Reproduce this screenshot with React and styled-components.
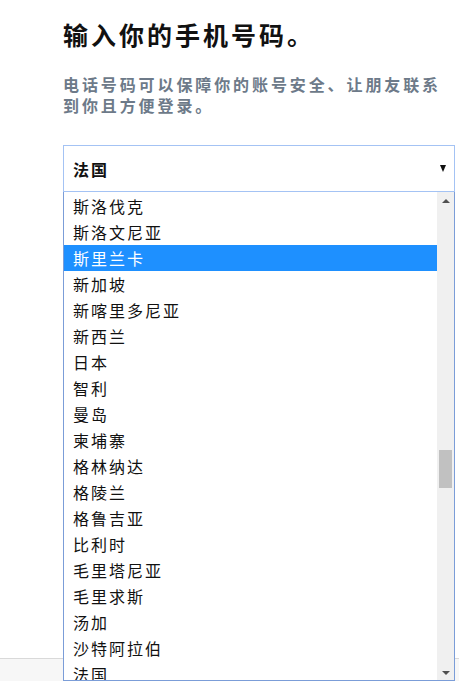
import React from "react";
import styled, { createGlobalStyle } from "styled-components";

const GlobalStyle = createGlobalStyle`
  html, body {
    margin: 0;
    padding: 0;
    background: #fff;
    font-family: "Noto Sans CJK SC", "Noto Sans", sans-serif;
  }
`;

const Page = styled.div`
  min-height: 100vh;
  display: flex;
  flex-direction: column;
  overflow: hidden;
`;

const Main = styled.main`
  flex: 1;
  padding: 0 4px 0 63px;
`;

const Title = styled.h1`
  margin: 0;
  padding-top: 17px;
  font-size: 25px;
  line-height: 34px;
  font-weight: 700;
  letter-spacing: 3px;
  color: #111;
`;

const Intro = styled.p`
  margin: 23px 0 0;
  font-size: 16px;
  line-height: 21px;
  font-weight: 700;
  letter-spacing: 2.9px;
  color: #6d7a89;
`;

const SelectWrap = styled.div`
  position: relative;
  margin-top: 29px;
  width: 392px;
`;

const SelectBox = styled.div`
  box-sizing: border-box;
  height: 47px;
  border: 1px solid #a4c3f4;
  display: flex;
  align-items: center;
  justify-content: space-between;
  padding: 0 8px 0 9px;
  font-size: 16px;
  font-weight: 700;
  letter-spacing: 2px;
  color: #111;
`;

const Caret = styled.span`
  width: 0;
  height: 0;
  border-left: 3.5px solid transparent;
  border-right: 3.5px solid transparent;
  border-top: 7px solid #111;
`;

const Menu = styled.div`
  position: absolute;
  top: 100%;
  left: 0;
  right: 0;
  box-sizing: border-box;
  height: 489px;
  border: 1px solid #7b9dd8;
  border-top: none;
  background: #fff;
  display: flex;
  overflow: hidden;
`;

const Options = styled.ul`
  flex: 1;
  margin: 0;
  padding: 1px 0 0;
  list-style: none;
`;

const Option = styled.li`
  height: 26px;
  line-height: 26px;
  padding-left: 9px;
  font-size: 16px;
  letter-spacing: 2px;
  color: ${(p) => (p.$active ? "#fff" : "#111")};
  background: ${(p) => (p.$active ? "#1e90ff" : "transparent")};
`;

const Track = styled.div`
  width: 17px;
  background: #f0f0f0;
  display: flex;
  flex-direction: column;
  align-items: center;
`;

const Arrow = styled.span`
  width: 0;
  height: 0;
  border-left: 4px solid transparent;
  border-right: 4px solid transparent;
  ${(p) =>
    p.$down
      ? "border-top: 4px solid #505050; margin-top: auto; margin-bottom: 5px;"
      : "border-bottom: 4px solid #505050; margin-top: 7px;"}
`;

const Thumb = styled.div`
  width: 13px;
  height: 38px;
  margin-top: 247px;
  background: #c1c1c1;
`;

const Footer = styled.footer`
  height: 22px;
  border-top: 1px solid #d9d9d9;
  background: #f7f7f7;
`;

const countries = [
  "斯洛伐克",
  "斯洛文尼亚",
  "斯里兰卡",
  "新加坡",
  "新喀里多尼亚",
  "新西兰",
  "日本",
  "智利",
  "曼岛",
  "柬埔寨",
  "格林纳达",
  "格陵兰",
  "格鲁吉亚",
  "比利时",
  "毛里塔尼亚",
  "毛里求斯",
  "汤加",
  "沙特阿拉伯",
  "法国",
];

export default function App() {
  return (
    <Page>
      <GlobalStyle />
      <Main>
        <Title>输入你的手机号码。</Title>
        <Intro>电话号码可以保障你的账号安全、让朋友联系到你且方便登录。</Intro>
        <SelectWrap>
          <SelectBox>
            <span>法国</span>
            <Caret />
          </SelectBox>
          <Menu>
            <Options>
              {countries.map((c) => (
                <Option key={c} $active={c === "斯里兰卡"}>
                  {c}
                </Option>
              ))}
            </Options>
            <Track>
              <Arrow />
              <Thumb />
              <Arrow $down />
            </Track>
          </Menu>
        </SelectWrap>
      </Main>
      <Footer />
    </Page>
  );
}
